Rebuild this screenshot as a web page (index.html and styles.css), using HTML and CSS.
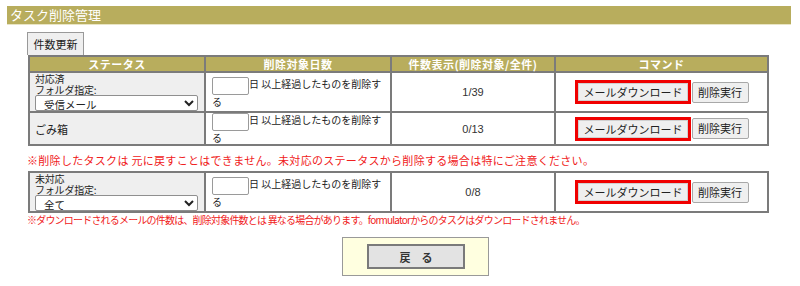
FILE: index.html
```html
<!DOCTYPE html>
<html lang="ja">
<head>
    <meta charset="UTF-8">
    <title>タスク削除管理</title>
    <link rel="stylesheet" href="styles.css">
</head>
<body>
    <h1 class="title-bar">タスク削除管理</h1>

    <div class="content">
        <button class="btn refresh-btn">件数更新</button>

        <table class="task-table">
            <colgroup>
                <col class="col-status"><col class="col-days"><col class="col-count"><col class="col-cmd">
            </colgroup>
            <tr class="row-head">
                <th>ステータス</th>
                <th>削除対象日数</th>
                <th>件数表示(削除対象/全件)</th>
                <th>コマンド</th>
            </tr>
            <tr class="row-tall">
                <td class="status-cell">
                    <div class="status-label">対応済</div>
                    <div class="status-label">フォルダ指定:</div>
                    <select class="folder-select"><option>受信メール</option></select>
                </td>
                <td class="days-cell"><input type="text" class="days-input">日 以上経過したものを削除する</td>
                <td class="count-cell">1/39</td>
                <td class="cmd-cell">
                    <span class="hl"><button class="btn">メールダウンロード</button></span><button class="btn">削除実行</button>
                </td>
            </tr>
            <tr class="row-short">
                <td class="status-cell">ごみ箱</td>
                <td class="days-cell"><input type="text" class="days-input">日 以上経過したものを削除する</td>
                <td class="count-cell">0/13</td>
                <td class="cmd-cell">
                    <span class="hl"><button class="btn">メールダウンロード</button></span><button class="btn">削除実行</button>
                </td>
            </tr>
        </table>

        <p class="note note-first">※削除したタスクは 元に戻すことはできません。未対応のステータスから削除する場合は特にご注意ください。</p>

        <table class="task-table">
            <colgroup>
                <col class="col-status"><col class="col-days"><col class="col-count"><col class="col-cmd">
            </colgroup>
            <tr class="row-tall">
                <td class="status-cell">
                    <div class="status-label">未対応</div>
                    <div class="status-label">フォルダ指定:</div>
                    <select class="folder-select"><option>全て</option></select>
                </td>
                <td class="days-cell"><input type="text" class="days-input">日 以上経過したものを削除する</td>
                <td class="count-cell">0/8</td>
                <td class="cmd-cell">
                    <span class="hl"><button class="btn">メールダウンロード</button></span><button class="btn">削除実行</button>
                </td>
            </tr>
        </table>

        <p class="note note-last">※ダウンロードされるメールの件数は、削除対象件数とは 異なる場合があります。formulatorからのタスクはダウンロードされません。</p>

        <div class="back-box">
            <button class="back-btn">戻　る</button>
        </div>
    </div>
</body>
</html>
```

FILE: styles.css
```css
body {
    margin: 0;
    padding: 6px 9px 0 7px;
    font-family: "Noto Sans CJK JP", "Liberation Sans", sans-serif;
    font-size: 11px;
    color: #222;
    background-color: #fff;
}

.title-bar {
    margin: 0;
    height: 18px;
    line-height: 18px;
    padding-left: 3px;
    background-color: #b8ad5d;
    border-bottom: 1px solid #e9e5c4;
    color: #fff;
    font-size: 13px;
    font-weight: normal;
}

.content {
    padding-left: 20px;
}

.btn {
    font-family: inherit;
    font-size: 11px;
    color: #222;
    background-color: #efefef;
    border: 1px solid #a8a8a8;
    border-radius: 2px;
    padding: 0 5px;
    height: 21px;
    line-height: 19px;
    cursor: pointer;
}

.refresh-btn {
    display: block;
    margin-top: 7px;
    width: 57px;
    height: 23px;
    padding: 0;
    border-radius: 0;
    border-color: #999;
    border-bottom: none;
}

.task-table {
    border-collapse: collapse;
    table-layout: fixed;
    width: 739px;
    margin-left: 1px;
    border: 2px solid #7b7b7b;
}

.task-table th,
.task-table td {
    border: 2px solid #7b7b7b;
    padding: 0;
}

.col-status { width: 176px; }
.col-days { width: 186px; }
.col-count { width: 164px; }
.col-cmd { width: 213px; }

.row-head th {
    height: 14px;
    background-color: #b8ad5d;
    color: #fff;
    font-size: 11px;
    font-weight: bold;
    letter-spacing: 0.5px;
    line-height: 14px;
}

.row-tall td { height: 38px; }
.row-short td { height: 31px; }

.status-cell {
    background-color: #efefef;
    padding: 0 5px !important;
    font-size: 11px;
    line-height: 12px;
}

.status-label {
    height: 11px;
    font-size: 10px;
    line-height: 11px;
    letter-spacing: -0.2px;
}

.folder-select {
    display: block;
    width: 163px;
    height: 16px;
    margin: 0;
    padding: 0 0 0 4px;
    font-family: inherit;
    font-size: 10.5px;
    line-height: 14px;
    border: 1px solid #8f8f8f;
    border-radius: 2px;
    background-color: #fff;
    color: #222;
}

.days-cell {
    padding: 0 2px 0 6px !important;
    font-size: 10px;
    line-height: 13px;
}

.days-input {
    width: 37px;
    height: 18px;
    margin: 0;
    padding: 0;
    border: 1px solid #9a9a9a;
    border-radius: 2px;
    vertical-align: top;
    box-sizing: border-box;
}

.count-cell {
    text-align: center;
    font-family: "Liberation Sans", sans-serif;
    font-size: 11px;
    color: #333;
}

.cmd-cell {
    text-align: center;
    white-space: nowrap;
}

.hl {
    display: inline-block;
    border: 3px solid #f00000;
    margin-right: 1px;
    vertical-align: middle;
}

.hl .btn {
    display: block;
    width: 110px;
    height: 18px;
    line-height: 16px;
    border-radius: 0;
    border-color: #d0d0d0;
}

.cmd-cell > .btn {
    vertical-align: middle;
    width: 57px;
    padding: 0;
}

.note {
    margin: 0;
    color: #f02020;
    font-size: 11px;
    line-height: 14px;
    white-space: nowrap;
}

.note-first {
    margin: 7px 0 4px 0;
    letter-spacing: 0.3px;
}

.note-last {
    font-size: 10px;
    letter-spacing: -0.8px;
}

.back-box {
    margin: 10px 0 0 315px;
    width: 121px;
    height: 25px;
    padding: 6px 0 6px 24px;
    background-color: #ffffe0;
    border: 1px solid #999;
}

.back-btn {
    width: 98px;
    height: 25px;
    font-family: inherit;
    font-size: 11px;
    font-weight: bold;
    color: #333;
    background-color: #e3e3e3;
    border: 2px solid #7a7a7a;
    cursor: pointer;
}
```
